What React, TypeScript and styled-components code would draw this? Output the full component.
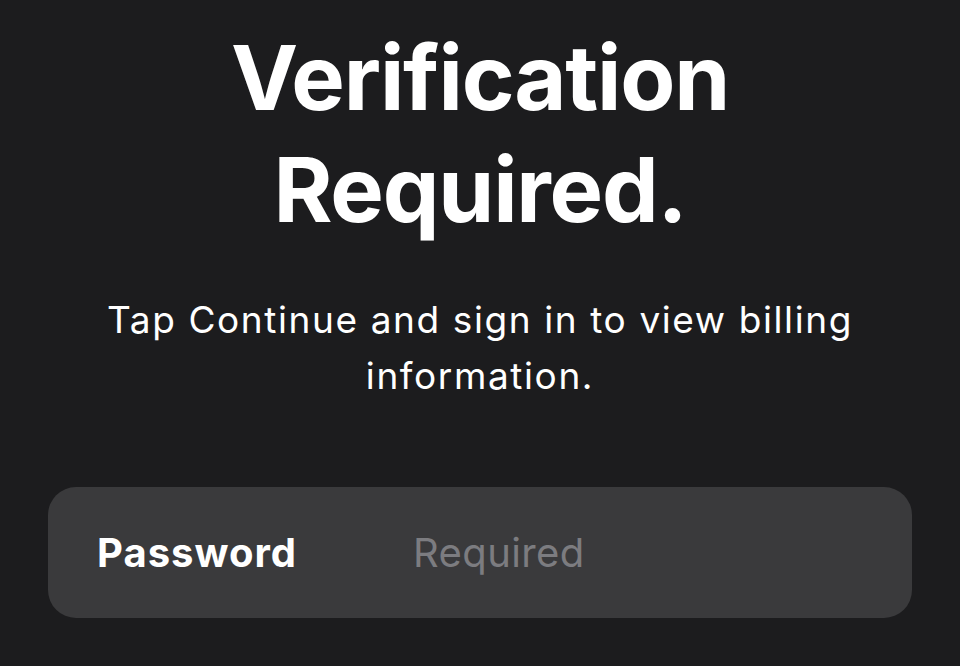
import React from "react";
import styled, { createGlobalStyle } from "styled-components";

const Global = createGlobalStyle`
  html, body { margin: 0; padding: 0; background: #1c1c1e; }
  body { font-family: Inter, "Noto Sans", "Liberation Sans", sans-serif; -webkit-font-smoothing: antialiased; }
`;

const Page = styled.main`
  width: 960px;
  height: 666px;
  overflow: hidden;
  background: #1c1c1e;
  display: flex;
  flex-direction: column;
  align-items: center;
  box-sizing: border-box;
  padding: 22px 48px 0;
`;

const Title = styled.h1`
  margin: 0;
  color: #ffffff;
  font-size: 90px;
  font-weight: 700;
  line-height: 112px;
  letter-spacing: -1.2px;
  text-align: center;
`;

const Subtitle = styled.p`
  margin: 46px 0 0;
  color: #ffffff;
  font-size: 37px;
  font-weight: 400;
  line-height: 56px;
  letter-spacing: 1.6px;
  text-align: center;
  max-width: 820px;
`;

const Field = styled.label`
  margin-top: 83px;
  align-self: stretch;
  height: 131px;
  background: #3a3a3c;
  border-radius: 28px;
  display: flex;
  align-items: center;
  padding: 0 49px;
  box-sizing: border-box;
`;

const FieldLabel = styled.span`
  color: #ffffff;
  font-size: 40px;
  font-weight: 700;
  letter-spacing: 1px;
  width: 316px;
  flex-shrink: 0;
`;

const FieldInput = styled.input`
  flex: 1;
  border: none;
  outline: none;
  background: transparent;
  color: #ffffff;
  font-family: inherit;
  font-size: 40px;
  letter-spacing: 0.4px;
  padding: 0;
  &::placeholder { color: #7c7c80; }
`;

export default function App() {
  return (
    <>
      <Global />
      <Page>
        <Title>
          Verification
          <br />
          Required.
        </Title>
        <Subtitle>Tap Continue and sign in to view billing information.</Subtitle>
        <Field>
          <FieldLabel>Password</FieldLabel>
          <FieldInput type="password" placeholder="Required" />
        </Field>
      </Page>
    </>
  );
}
